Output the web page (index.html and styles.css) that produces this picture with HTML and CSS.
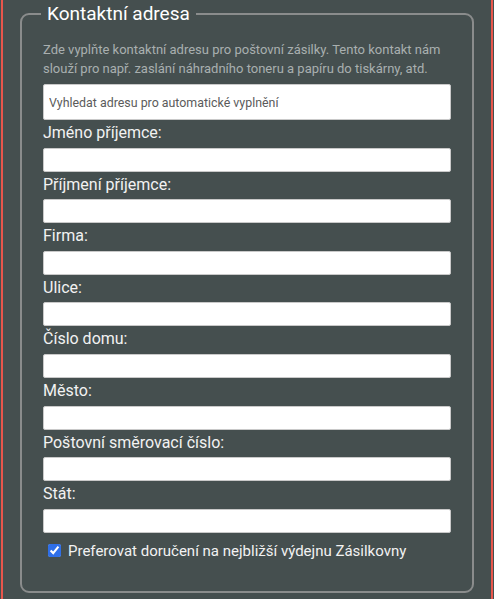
FILE: index.html
```html
<!DOCTYPE html>
<html>
<head>
	<meta charset="utf-8">
	<meta name="viewport" content="width=device-width, initial-scale=1">
	<title>Kontaktní adresa</title>
	<link rel="stylesheet" href="styles.css">
</head>
<body>
<div id="page">
	<fieldset class="contact">
		<legend>Kontaktní adresa</legend>
		<p class="hint">Zde vyplňte kontaktní adresu pro poštovní zásilky. Tento kontakt nám slouží pro např. zaslání náhradního toneru a papíru do tiskárny, atd.</p>
		<input type="text" class="search" placeholder="Vyhledat adresu pro automatické vyplnění">

		<label for="name">Jméno příjemce:</label>
		<input type="text" id="name">

		<label for="surname">Příjmení příjemce:</label>
		<input type="text" id="surname">

		<label for="company">Firma:</label>
		<input type="text" id="company">

		<label for="street">Ulice:</label>
		<input type="text" id="street">

		<label for="house">Číslo domu:</label>
		<input type="text" id="house">

		<label for="city">Město:</label>
		<input type="text" id="city">

		<label for="zip">Poštovní směrovací číslo:</label>
		<input type="text" id="zip">

		<label for="country">Stát:</label>
		<input type="text" id="country">

		<div class="prefer">
			<input type="checkbox" id="zasilkovna" checked>
			<label for="zasilkovna">Preferovat doručení na nejbližší výdejnu Zásilkovny</label>
		</div>
	</fieldset>
</div>
</body>
</html>
```

FILE: styles.css
```css
body
{
	margin:0;
	background-color:#454f4f;
	font-family:Roboto, "Liberation Sans", sans-serif;
}
#page
{
	margin:0 1px;
	padding:0 17px 20px 17px;
	border-left:2px solid #e8564c;
	border-right:2px solid #e8564c;
	min-height:620px;
}
#page .contact
{
	margin:0;
	padding:13px 21px 30px 21px;
	border:2px solid #8a8c8c;
	border-radius:9px;
}
#page .contact legend
{
	margin-left:-2px;
	padding:0 6px;
	color:#ffffff;
	font-size:19px;
	line-height:28px;
}
#page .hint
{
	margin:0 0 6px 0;
	color:#a9afaf;
	font-size:13px;
	line-height:18.5px;
}
#page input[type=text]
{
	display:block;
	box-sizing:border-box;
	width:100%;
	height:24px;
	margin:0;
	border:1px solid #c9c9c9;
	border-radius:2px;
	background-color:#ffffff;
}
#page .search
{
	height:36px !important;
	margin-bottom:3px !important;
	padding:0 5px;
	font-family:Roboto, "Liberation Sans", sans-serif;
	font-size:12.4px;
}
#page .search::placeholder
{
	color:#5b5b5b;
}
#page label
{
	display:block;
	margin:3px 0 4.6px 0;
	color:#f2f2f2;
	font-size:16px;
	line-height:20px;
}
#page .prefer
{
	display:flex;
	align-items:center;
	margin-top:8px;
	margin-left:5px;
}
#page .prefer input
{
	width:13px;
	height:13px;
	margin:0 7px 0 0;
	accent-color:#2f6fe8;
}
#page .prefer label
{
	margin:0;
	font-size:15px;
	line-height:20px;
}
```
